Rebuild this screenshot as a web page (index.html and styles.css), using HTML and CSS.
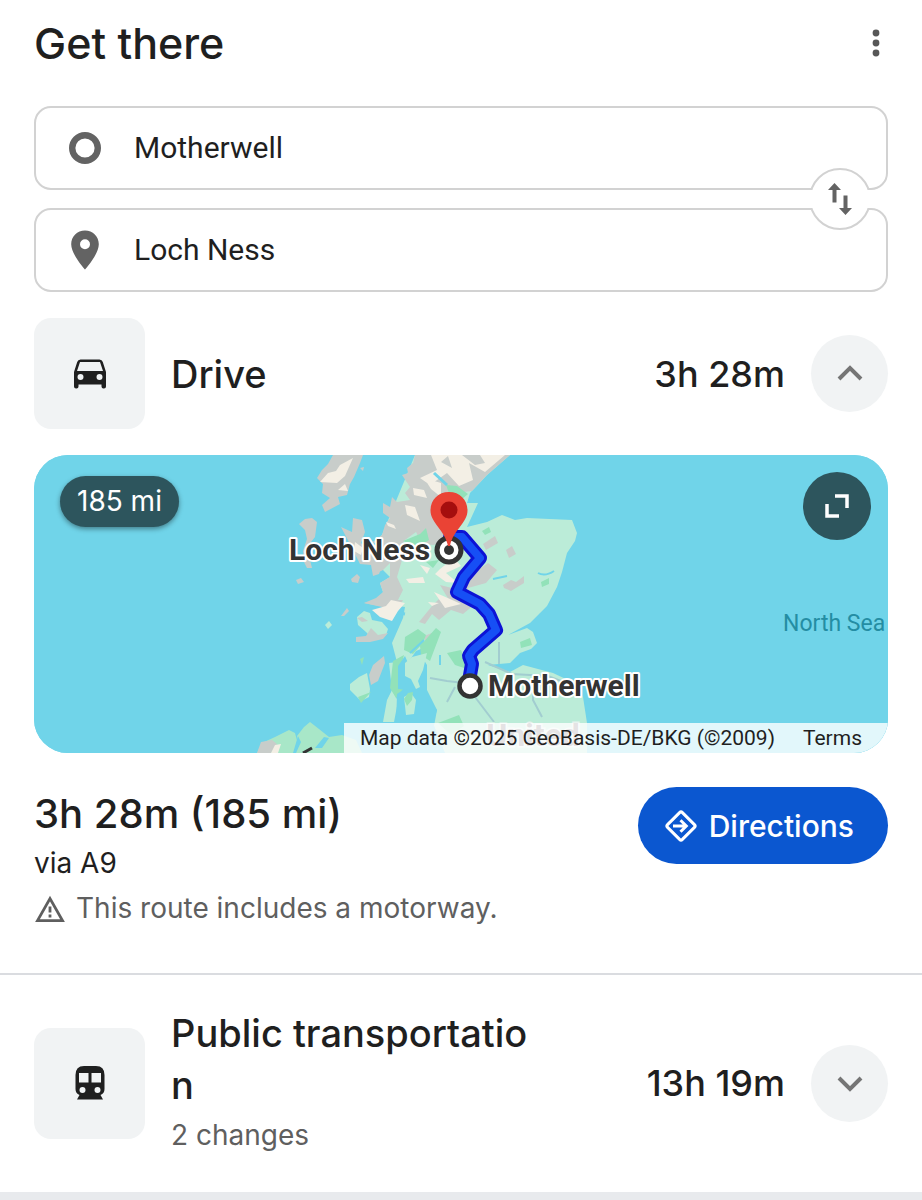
FILE: index.html
```
<!DOCTYPE html>
<html lang="en">

<head>
    <meta charset="UTF-8">
    <meta name="viewport" content="width=device-width, initial-scale=1.0">
    <title>Get there</title>
    <link rel="stylesheet" href="styles.css">
</head>

<body>
    <header class="header">
        <h1>Get there</h1>
        <button class="more" type="button" aria-label="More options">
            <svg width="10" height="28" viewBox="0 0 10 28" fill="#575757">
                <circle cx="5" cy="4" r="3.4" />
                <circle cx="5" cy="14" r="3.4" />
                <circle cx="5" cy="24" r="3.4" />
            </svg>
        </button>
    </header>

    <form class="places">
        <div class="field">
            <label for="from" aria-label="Start">
                <svg width="34" height="40" viewBox="0 0 34 40">
                    <circle cx="17" cy="20" r="12.8" fill="none" stroke="#636363" stroke-width="6.4" />
                </svg>
            </label>
            <input id="from" type="text" value="Motherwell">
        </div>
        <div class="field">
            <label for="to" aria-label="Destination">
                <svg width="34" height="40" viewBox="0 0 34 40">
                    <path fill="#636363" fill-rule="evenodd" d="M17 0.500C9.200 0.500 3.200 6.500 3.200 14.200C3.200 24.400 17 39.500 17 39.500S30.800 24.400 30.800 14.200C30.800 6.500 24.800 0.500 17 0.500ZM17 9.300A5 5 0 1 1 17 19.300A5 5 0 1 1 17 9.300Z" />
                </svg>
            </label>
            <input id="to" type="text" value="Loch Ness">
        </div>
        <button class="swap" type="button" aria-label="Swap start and destination">
            <svg width="26" height="34" viewBox="0 0 26 34" fill="#636363">
                <path d="M7.500 1L14 8H9.500V20.500H5.500V8H1Z" />
                <path d="M18.500 33L12 26H16.500V13.500H20.500V26H25Z" />
            </svg>
        </button>
    </form>

    <main>
        <section class="route">
            <div class="mode">
                <div class="tile">
                    <svg width="34" height="30" viewBox="0 0 34 30" fill="#1f1f1f">
                        <path fill-rule="evenodd" d="M7.500 0.500H26.500Q29 0.500 29.800 3L33 13V27.500Q33 29.500 31 29.500H30.500Q28.500 29.500 28.500 27.500V25.500H5.500V27.500Q5.500 29.500 3.500 29.500H3Q1 29.500 1 27.500V13L4.200 3Q5 0.500 7.500 0.500ZM7 3L4 12H30L27 3ZM7.500 15A3 3 0 1 0 7.500 21A3 3 0 1 0 7.500 15ZM26.500 15A3 3 0 1 0 26.500 21A3 3 0 1 0 26.500 15Z" />
                    </svg>
                </div>
                <div class="mode-name">
                    <h2>Drive</h2>
                </div>
                <span class="time">3h 28m</span>
                <button class="toggle" type="button" aria-label="Hide route">
                    <svg width="28" height="28" viewBox="0 0 28 28" fill="none" stroke="#757575" stroke-width="4">
                        <path d="M3 19L14 8L25 19" />
                    </svg>
                </button>
            </div>

            <div class="map">
                <svg class="map-art" viewBox="34 455 854 298" preserveAspectRatio="xMidYMid slice">
                    <rect x="-1000" y="455" width="3000" height="298" fill="#70d4e9" />

                    <!-- western isles -->
                    <g fill="#c8cdca">
                        <path d="M333 455H363L360 463L354 477L350 484L347 495L338 497L340 504L325 512L322 505L330 498L322 493L323 484L317 478L322 470L328 464Z" />
                        <path d="M299 524L305 519L312 518L317 522L315 537L311 542L312 550L309 556L312 568H307L304 562L303 551L307 539L305 530Z" />
                        <path d="M341 527L352 532L353 518L362 520L365 532L361 543L370 551L385 558L379 574L373 576L371 565L360 564L352 548Z" />
                        <path d="M296 580L301 578L304 582L298 584ZM351 579L357 574L360 577L358 583L352 582ZM360 468L364 467L363 471ZM341 616L347 608L349 611L344 616Z" />
                    </g>
                    <path fill="#f3efe5" d="M340 465L353 458L345 476L337 483L320 482L328 473L336 471ZM338 490L345 484L348 491ZM355 542L363 548L361 555L354 551Z" />

                    <!-- mainland -->
                    <path fill="#bbecd8" d="M415 455H510L487 475L470 493L467 503L478 503L467 527L487 522L502 515L515 520L527 518L572 520L577 533L575 541L567 553L562 572L557 587L547 606L540 613L530 623L508 635L527 628L533 632L537 643L531 649L520 653L510 663L488 665L510 672L523 665L553 673L570 681L583 697L587 723V753H445L433 723L437 710L427 690V665L422 657L428 646L416 651L405 667L399 660L392 690L398 701L394 722H383L387 700L392 690L389 663L397 662L392 643L403 618L405 607L380 603L383 592L380 583L390 577L383 570L380 560L383 547L373 542L382 535Z" />
                    <path fill="#c8cdca" d="M415 455L413 463L407 468L408 473L402 475L410 487L405 493L410 500L397 502L392 497L390 507L383 503V513L390 518L385 525L382 535L373 542L383 547L380 560L373 575L383 570L390 563V577L380 583L383 592L376 598L364 603L379 606L398 600L403 590L397 577L402 560L398 552L405 540L416 532L422 544L434 545L452 532L458 505L455 493L472 491L487 475L510 455Z" />
                    <path fill="#f3efe5" d="M431 455H505L485 472L469 463L473 480L459 486L447 473L430 485L420 478L437 470ZM413 488L424 490L427 498L414 495ZM405 505L415 507L420 521L407 515ZM424 478L441 483V497L431 489ZM386 522L394 525L396 529L388 526Z" />
                    <path fill="#c8cdca" d="M462 455H480L485 463L475 465ZM441 462L448 456L452 468ZM440 585L452 588L474 573L488 563L497 570L486 583L468 588L475 604L463 614L451 610L439 620L432 614L425 624L419 622L432 606L440 598L449 600ZM483 544L495 536L498 543L486 550ZM506 550L512 546L516 554L509 558ZM503 585L511 580L516 582L524 576V583L511 591L504 588ZM424 636L432 633L433 644L426 647Z" />
                    <path fill="#f3efe5" d="M440 569L454 558L461 566L446 573L458 583L446 582L435 574ZM406 579L423 577L425 583L409 583ZM434 592L450 599L461 604L445 608ZM428 602L439 603L432 606ZM420 565L430 568L427 574Z" />
                    <path fill="#92e2b9" d="M446 485L457 486L468 494L460 501L449 493ZM426 562L439 560L433 568ZM403 541L420 534L426 528L429 540L419 547ZM482 531L489 527L491 532L485 535ZM541 582L549 578V584L542 587ZM405 637L418 629L426 635L423 643L413 654L404 650ZM420 646L436 628L441 632L430 661L421 655ZM393 661L404 655L400 671L403 689L396 698L390 688ZM447 653L461 650L470 670L455 665ZM520 642L530 638L532 645L521 648ZM438 723L459 715L464 726L451 735Z" />

                    <!-- lochs and firths -->
                    <g fill="none" stroke="#70d4e9">
                        <path stroke-width="3" d="M434 473L447 485M381 606L394 612L405 614" />
                        <path stroke-width="2" d="M493 579L507 576M538 573Q545 577 554 571M440 655V665M410 653L424 640" />
                    </g>
                    <path fill="#70d4e9" d="M397 694L403 690L414 689L424 690L428 700L437 710L434 726L396 727ZM398 666L405 656L408 663L403 678L408 690L398 689Z" />

                    <!-- inner isles and Arran -->
                    <path fill="#bbecd8" d="M405 663L412 657L427 653L423 670L418 681L420 687L416 689L411 679L405 676ZM357 617L364 611L370 613L372 620L382 622L388 629L386 635L372 638L366 632L358 625ZM325 625L329 621L332 625L328 629ZM350 684L359 677L367 673L370 689L369 697L361 701L356 696L350 690ZM404 697L411 693L416 700L414 714L406 715Z" />
                    <path fill="#c8cdca" d="M364 603L382 600H403L399 608L382 607ZM357 618L362 617L368 621L362 622ZM356 637L366 636L371 628L378 635L388 633L383 639L370 642H356ZM369 675L373 665L384 656L385 663L378 681L371 685Z" />
                    <path fill="#f3efe5" d="M372 610L386 606L391 600L405 603L398 611L392 621L380 617Z" />
                    <path fill="#92e2b9" d="M404 699L408 693L413 692L412 700L407 706ZM360 659L364 657L362 665ZM358 697L371 692L361 703Z" />

                    <!-- Northern Ireland -->
                    <path fill="#a8e7c8" d="M257 753L262 743L275 737L289 730L295 733L298 744L297 736L304 727L310 722L319 729L329 737L342 735L356 740L362 753Z" />
                    <path fill="#c8cdca" d="M257 753L261 742L272 740L277 744L271 753Z" />
                    <path fill="#f3efe5" d="M271 753L275 745L281 744L278 753Z" />
                    <path fill="#70d4e9" d="M315 748L324 737L329 738L322 748ZM298 736L301 742L296 753H293Z" />
                    <path fill="none" stroke="#333" stroke-width="3" d="M303 753L312 748" />

                    <!-- roads -->
                    <path fill="none" stroke="#a2cdd0" stroke-width="2" d="M499 642V664M485 662L512 674L548 676L566 683M475 697L494 722M533 687V700L542 717M464 683L447 681L430 678M455 687L447 702" />

                    <text class="country" x="533" y="746">United</text>

                    <g fill="none" stroke-linejoin="round" stroke-linecap="round">
                        <path stroke="#0c13d5" stroke-width="14" d="M450 537H462L480 558L464 577L457 592L480 604L489 614L496 630L473 650L469 656L472 664L469 681" />
                        <path stroke="#164ff5" stroke-width="8" d="M450 537H462L480 558L464 577L457 592L480 604L489 614L496 630L473 650L469 656L472 664L469 681" />
                    </g>
                    <circle cx="470" cy="686" r="10.500" fill="#fff" stroke="#333" stroke-width="4.500" />
                    <circle cx="449" cy="550" r="12" fill="#fff" stroke="#333" stroke-width="5" />
                    <circle cx="449" cy="550" r="5" fill="#333" />
                    <path fill="#ea4335" d="M449 492C438 492 430.500 500 430.500 510.500C430.500 523 445 530 448 546H450C453 530 467.500 523 467.500 510.500C467.500 500 460 492 449 492Z" />
                    <circle cx="449" cy="510" r="8.500" fill="#a50e0e" />

                    <text class="place" x="289" y="560">Loch Ness</text>
                    <text class="place" x="488" y="696">Motherwell</text>
                    <text class="sea" x="783" y="631">North Sea</text>
                </svg>
                <span class="distance">185 mi</span>
                <button class="expand" type="button" aria-label="Expand map">
                    <svg width="24" height="24" viewBox="0 0 24 24" fill="none" stroke="#fff" stroke-width="3.500">
                        <path d="M10 2H22V14M2 10V22H14" />
                    </svg>
                </button>
                <div class="credits">
                    <span>Map data ©2025 GeoBasis-DE/BKG (©2009)</span>
                    <a href="#terms">Terms</a>
                </div>
            </div>

            <div class="summary">
                <div class="summary-text">
                    <h3>3h 28m (185 mi)</h3>
                    <p>via A9</p>
                    <p class="note">
                        <svg width="32" height="30" viewBox="0 0 32 30" fill="none" stroke="#5f5f5f" stroke-width="2.800">
                            <path d="M3.500 26.600L16 4.500L28.500 26.600Z" />
                            <path d="M16 12.500V18.500M16 20.500V23.500" />
                        </svg>
                        This route includes a motorway.
                    </p>
                </div>
                <a class="directions" href="#directions">
                    <svg width="34" height="34" viewBox="0 0 34 34" fill="none" stroke="#fff" stroke-width="3">
                        <rect x="6.500" y="6.500" width="21" height="21" rx="2" transform="rotate(45 17 17)" />
                        <path d="M9 17H22M16.500 11.200L22.300 17L16.500 22.800" />
                    </svg>
                    Directions
                </a>
            </div>
        </section>

        <section class="route transit">
            <div class="mode">
                <div class="tile">
                    <svg width="38" height="38" viewBox="0 0 38 38">
                        <path fill="#1f1f1f" d="M4.500 11Q4.500 2 13 2H25Q33.500 2 33.500 11V25Q33.500 29.500 29.500 31L32 35.500H6L8.500 31Q4.500 29.500 4.500 25Z" />
                        <path fill="#f1f3f4" d="M8 9H17.500V18.500H8ZM20.500 9H30V18.500H20.500Z" />
                        <circle cx="11.500" cy="26" r="3" fill="#f1f3f4" />
                        <circle cx="26.500" cy="26" r="3" fill="#f1f3f4" />
                    </svg>
                </div>
                <div class="mode-name">
                    <h2>Public transportation</h2>
                    <p>2 changes</p>
                </div>
                <span class="time">13h 19m</span>
                <button class="toggle" type="button" aria-label="Show route">
                    <svg width="28" height="28" viewBox="0 0 28 28" fill="none" stroke="#757575" stroke-width="4">
                        <path d="M3 9L14 20L25 9" />
                    </svg>
                </button>
            </div>
        </section>
    </main>
</body>

</html>
```
FILE: styles.css
```
* {
    box-sizing: border-box;
}

body {
    margin: 0;
    background: #fff;
    color: #1f1f1f;
    font-family: "Google Sans", Inter, Roboto, sans-serif;
    font-size: 28px;
}

h1,
h2,
h3,
p {
    margin: 0;
    font-weight: 500;
}

button {
    display: flex;
    align-items: center;
    justify-content: center;
    padding: 0;
    border: none;
    cursor: pointer;
}

svg {
    display: block;
    flex: none;
}

.header {
    display: flex;
    align-items: center;
    justify-content: space-between;
    padding: 15px 34px 35px;
}

h1 {
    font-size: 43px;
    line-height: 56px;
}

.more {
    width: 24px;
    height: 56px;
    background: none;
}

.places {
    position: relative;
    display: flex;
    flex-direction: column;
    gap: 18px;
    margin: 0 34px 26px;
}

.field {
    display: flex;
    align-items: center;
    gap: 32px;
    height: 84px;
    padding: 0 32px;
    border: 2px solid #d2d2d2;
    border-radius: 17px;
}

.field input {
    flex: 1;
    min-width: 0;
    padding: 0 0 2px;
    border: none;
    outline: none;
    background: none;
    color: #1f1f1f;
    font-family: Roboto, sans-serif;
    font-size: 30px;
}

.swap {
    position: absolute;
    top: calc(50% - 31px);
    right: 17px;
    width: 62px;
    height: 62px;
    border: 2px solid #d2d2d2;
    border-radius: 50%;
    background: #fff;
}

/* hides the ring where it crosses the gap between the fields */
.swap::before {
    content: "";
    position: absolute;
    top: 20px;
    right: -2px;
    left: -2px;
    height: 18px;
    background: #fff;
}

.swap svg {
    position: relative;
}

.route {
    padding: 0 34px;
}

.mode {
    display: flex;
    align-items: center;
    gap: 26px;
}

.tile {
    display: flex;
    flex: none;
    align-items: center;
    justify-content: center;
    width: 111px;
    height: 111px;
    border-radius: 17px;
    background: #f1f3f4;
}

.mode-name {
    flex: 1;
}

h2 {
    max-width: 368px;
    font-size: 38px;
    line-height: 52px;
    word-break: break-all;
}

.mode-name p {
    color: #5f5f5f;
    font-weight: 400;
    line-height: 48px;
}

.time {
    font-size: 36px;
    font-weight: 500;
    white-space: nowrap;
}

.toggle {
    flex: none;
    width: 77px;
    height: 77px;
    border-radius: 50%;
    background: #f1f3f4;
}

.map {
    position: relative;
    height: 298px;
    margin-top: 26px;
    border-radius: 34px;
    overflow: hidden;
    background: #70d4e9;
}

.map-art {
    width: 100%;
    height: 100%;
}

.map-art text {
    font-family: Roboto, sans-serif;
}

.place {
    fill: #333;
    stroke: #fff;
    stroke-width: 4px;
    stroke-linejoin: round;
    paint-order: stroke;
    font-size: 30px;
    font-weight: 700;
}

.sea {
    fill: #248da3;
    font-size: 23px;
}

.country {
    fill: #7d757b;
    stroke: #e6f3ee;
    stroke-width: 3px;
    paint-order: stroke;
    font-size: 32px;
    font-weight: 700;
    text-anchor: middle;
}

.distance {
    position: absolute;
    top: 21px;
    left: 26px;
    padding: 0 17px;
    border-radius: 26px;
    background: #2d555d;
    box-shadow: 0 2px 5px rgba(0, 0, 0, 0.4);
    color: #fff;
    line-height: 51px;
}

.expand {
    position: absolute;
    top: 17px;
    right: 17px;
    width: 68px;
    height: 68px;
    border-radius: 50%;
    background: #2d555d;
}

.credits {
    position: absolute;
    right: 0;
    bottom: 0;
    display: flex;
    gap: 28px;
    padding: 0 26px 0 16px;
    background: rgba(255, 255, 255, 0.8);
    color: #1f1f1f;
    font-family: Roboto, sans-serif;
    font-size: 21px;
    line-height: 30px;
}

.credits a {
    color: inherit;
    text-decoration: none;
}

.summary {
    display: flex;
    align-items: flex-start;
    justify-content: space-between;
    padding: 34px 0 42px;
}

h3 {
    font-size: 40px;
    line-height: 54px;
}

.summary p {
    font-weight: 400;
    line-height: 45px;
}

.summary .note {
    display: flex;
    align-items: center;
    gap: 10px;
    color: #5f5f5f;
}

.directions {
    display: flex;
    flex: none;
    align-items: center;
    gap: 11px;
    height: 77px;
    padding: 0 34px 0 26px;
    border-radius: 39px;
    background: #0b57d0;
    color: #fff;
    font-size: 30px;
    font-weight: 500;
    text-decoration: none;
}

.transit {
    padding-top: 32px;
    padding-bottom: 33px;
    border-top: 2px solid #dadce0;
    border-bottom: 8px solid #e8eaed;
}
```
